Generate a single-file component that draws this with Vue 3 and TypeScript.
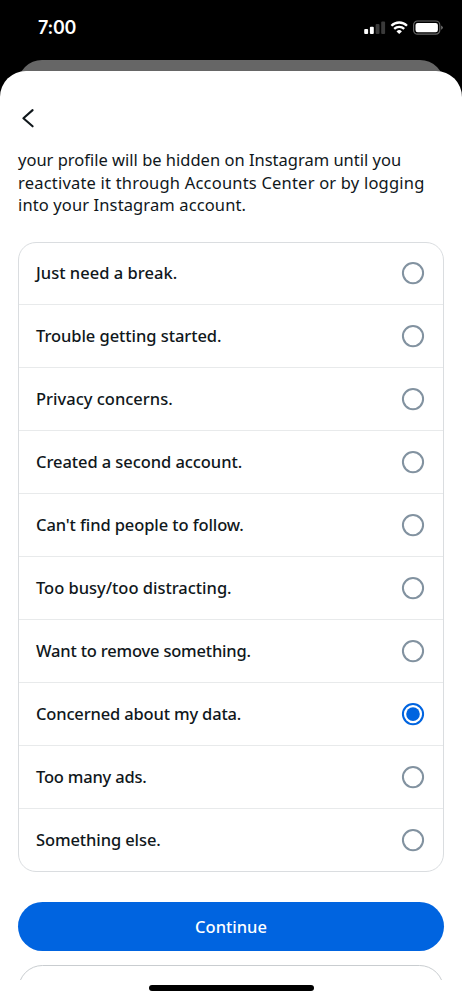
<script setup lang="ts">
import { ref } from 'vue'

interface TextLine {
  label: string
  tracking: number
}

const intro: TextLine[] = [
  { label: 'your profile will be hidden on Instagram until you', tracking: 0 },
  { label: 'reactivate it through Accounts Center or by logging', tracking: 0.2 },
  { label: 'into your Instagram account.', tracking: 0.12 },
]

const reasons: TextLine[] = [
  { label: 'Just need a break.', tracking: 0.02 },
  { label: 'Trouble getting started.', tracking: -0.06 },
  { label: 'Privacy concerns.', tracking: 0 },
  { label: 'Created a second account.', tracking: -0.07 },
  { label: "Can't find people to follow.", tracking: -0.1 },
  { label: 'Too busy/too distracting.', tracking: -0.02 },
  { label: 'Want to remove something.', tracking: -0.19 },
  { label: 'Concerned about my data.', tracking: -0.16 },
  { label: 'Too many ads.', tracking: -0.2 },
  { label: 'Something else.', tracking: -0.1 },
]

const selected = ref('Concerned about my data.')
</script>

<template>
  <div class="phone">
    <header class="status">
      <span class="time">7:00</span>
      <svg class="indicators" width="80" height="16" viewBox="0 0 80 16" aria-hidden="true">
        <rect x="1.2" y="9" width="3.9" height="5" rx="1" fill="#fff" />
        <rect x="6.9" y="6.8" width="3.9" height="7.2" rx="1" fill="#fff" />
        <rect x="12.6" y="4" width="3.9" height="10" rx="1" fill="#3a3a3a" />
        <rect x="18.2" y="1.4" width="3.9" height="12.6" rx="1" fill="#3a3a3a" />
        <g fill="none" stroke="#fff" stroke-width="2.3">
          <path d="M28.4 5.7 A11.1 11.1 0 0 1 44 5.7" />
          <path d="M31.2 8.9 A7.1 7.1 0 0 1 41.2 8.9" />
        </g>
        <path d="M36.2 14 L33.5 11.4 A3.9 3.9 0 0 1 38.9 11.4 Z" fill="#fff" />
        <rect x="50.6" y="1" width="26.2" height="13.2" rx="4" fill="none" stroke="#666" stroke-width="1.2" />
        <rect x="52.5" y="2.9" width="22.4" height="9.4" rx="2.2" fill="#fff" />
        <path d="M78.2 5.4 Q79.8 6.1 79.8 7.6 Q79.8 9.1 78.2 9.8 Z" fill="#777" />
      </svg>
    </header>
    <div class="backdrop-card"></div>

    <main class="sheet">
      <button class="back" aria-label="Back">
        <svg width="15" height="20" viewBox="0 0 15 20">
          <path d="M11.6 2.1 L2.4 10.2 L11.6 18.3" fill="none" stroke="#10171b" stroke-width="2.1" stroke-linecap="round" stroke-linejoin="round" />
        </svg>
      </button>

      <p class="intro">
        <span v-for="line in intro" :key="line.label" :style="{ letterSpacing: line.tracking + 'px' }">{{ line.label }}</span>
      </p>

      <div class="reasons" role="radiogroup">
        <div
          v-for="reason in reasons"
          :key="reason.label"
          class="reason"
          role="radio"
          :aria-checked="selected === reason.label"
          @click="selected = reason.label"
        >
          <span class="label" :style="{ letterSpacing: reason.tracking + 'px' }">{{ reason.label }}</span>
          <svg class="radio" :class="{ on: selected === reason.label }" width="24" height="24" viewBox="0 0 24 24">
            <circle class="ring" cx="12" cy="12.1" r="10.1" />
            <circle v-if="selected === reason.label" class="dot" cx="12" cy="12.1" r="6.8" />
          </svg>
        </div>
      </div>

      <button class="continue">Continue</button>
      <div class="next"><div class="next-button"></div></div>
      <div class="home"></div>
    </main>
  </div>
</template>

<style>
body {
  margin: 0;
  background: #000;
}
</style>

<style scoped>
.phone {
  width: 462px;
  height: 1000px;
  overflow: hidden;
  background: #000;
  display: flex;
  flex-direction: column;
  font-family: 'Noto Sans', sans-serif;
  color: #10171b;
}
.status {
  height: 60px;
  flex: none;
  display: flex;
  justify-content: space-between;
  padding: 0 19px 0 38px;
  box-sizing: border-box;
}
.time {
  margin-top: 16px;
  font: 600 18px/24px Inter, sans-serif;
  letter-spacing: -0.3px;
  color: #fff;
}
.indicators {
  margin-top: 20px;
}
.backdrop-card {
  flex: none;
  height: 40px;
  margin: 0 18px;
  border-radius: 24px 24px 0 0;
  background: #666;
}
.sheet {
  flex: none;
  box-sizing: border-box;
  height: 929px;
  margin-top: -29px;
  padding: 37px 18px 0;
  border-radius: 26px 26px 0 0;
  background: #fff;
  display: flex;
  flex-direction: column;
}
button {
  border: 0;
  padding: 0;
  background: none;
  font-family: inherit;
}
.back {
  width: 20px;
  height: 20px;
  padding-left: 3px;
  display: flex;
}
.intro {
  margin: 21px 0 0;
  font-size: 16.5px;
  line-height: 22.5px;
}
.intro span {
  display: block;
  white-space: nowrap;
}
.reasons {
  box-sizing: border-box;
  height: 630px;
  margin-top: 25.5px;
  border: 1px solid #dadde0;
  border-radius: 18px;
  display: flex;
  flex-direction: column;
}
.reason {
  box-sizing: border-box;
  flex: none;
  height: 63px;
  display: flex;
  align-items: center;
  justify-content: space-between;
  padding: 0 18px 0 17px;
}
.reason:first-child {
  height: 61px;
  padding-bottom: 1px;
}
.reason + .reason {
  border-top: 1px solid #e8eaeb;
}
.label {
  padding-bottom: 1px;
  font-size: 16.5px;
  font-weight: 500;
  white-space: nowrap;
}
.ring {
  fill: none;
  stroke: #8292a0;
  stroke-width: 2;
}
.on .ring {
  stroke: #0064e0;
}
.dot {
  fill: #0064e0;
}
.continue {
  flex: none;
  height: 49px;
  margin-top: 30px;
  border-radius: 25px;
  background: #0064e0;
  color: #fff;
  font-size: 16.5px;
  font-weight: 500;
}
.next {
  flex: none;
  height: 15px;
  margin-top: 14px;
  overflow: hidden;
}
.next-button {
  box-sizing: border-box;
  height: 49px;
  border: 1px solid #c9cdd0;
  border-radius: 25px;
}
.home {
  flex: none;
  width: 165px;
  height: 6px;
  margin: 5px auto 0;
  border-radius: 3px;
  background: #000;
}
</style>
